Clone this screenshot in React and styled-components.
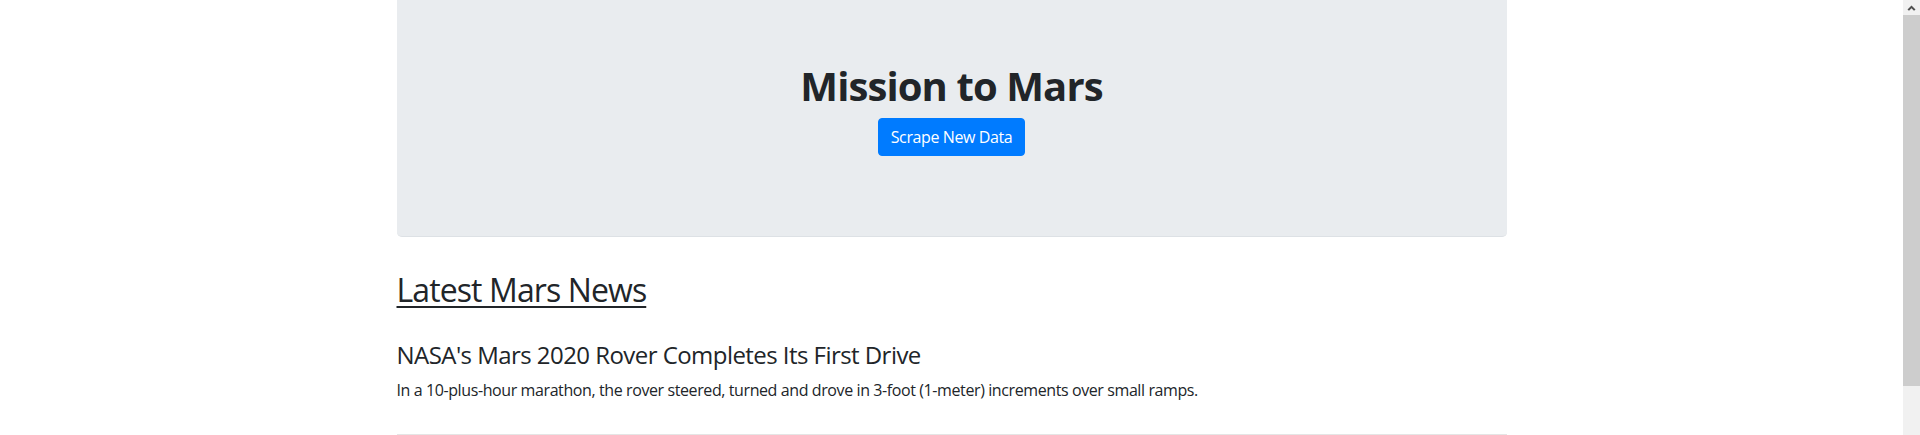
import styled, { createGlobalStyle } from 'styled-components';

const GlobalStyle = createGlobalStyle`
  html, body {
    margin: 0;
    padding: 0;
  }
  body {
    font-family: 'Open Sans', 'Liberation Sans', sans-serif;
    font-size: 16px;
    line-height: 1.5;
    color: #212529;
    background: #fff;
  }
  * {
    box-sizing: border-box;
  }
`;

// page + the browser's scrollbar as seen in the capture
const Viewport = styled.div`
  display: grid;
  grid-template-columns: 1fr 17px;
  align-items: start;
`;

const Scrollbar = styled.div`
  position: sticky;
  top: 0;
  height: 435px;
  display: flex;
  flex-direction: column;
  background: #f1f1f1;
`;

const ScrollArrow = styled.div`
  height: 15px;
  display: flex;
  align-items: center;
  justify-content: center;
  svg {
    width: 9px;
    height: 6px;
  }
`;

const ScrollThumb = styled.div`
  height: 371px;
  background: #cdcdcd;
`;

const Container = styled.div`
  width: 100%;
  max-width: 1140px;
  margin: 0 auto;
  padding: 0 15px 40px;
`;

const Jumbotron = styled.div`
  background: #e9ecef;
  margin-top: -2px;
  padding: 64px 32px;
  margin-bottom: 34px;
  border-radius: 0 0 4.8px 4.8px;
  border-bottom: 1px solid #dde1e5;
  text-align: center;
`;

const Title = styled.h1`
  margin: 0 0 8px;
  font-size: 40px;
  font-weight: 700;
  line-height: 1.2;
  letter-spacing: -0.9px;
`;

const ButtonRow = styled.p`
  margin: 0 0 16px;
`;

const Button = styled.button`
  font-family: inherit;
  font-size: 16px;
  line-height: 1.5;
  letter-spacing: -0.4px;
  color: #fff;
  background: #007bff;
  border: 1px solid #007bff;
  border-radius: 4px;
  padding: 6px 12px;
  cursor: pointer;
`;

const SectionTitle = styled.h2`
  margin: 0 0 8px;
  font-size: 32px;
  font-weight: 400;
  line-height: 1.2;
  letter-spacing: -0.9px;
  text-decoration: underline;
  text-decoration-thickness: 2px;
  text-underline-offset: 4px;
`;

const Article = styled.div`
  display: flow-root;
  padding-top: 24px;
`;

const ArticleTitle = styled.h4`
  margin: 0 0 8px;
  font-size: 24px;
  font-weight: 400;
  line-height: 1.2;
  letter-spacing: -0.55px;
`;

const ArticleText = styled.p`
  margin: 0 0 16px;
  font-size: 16px;
  letter-spacing: -0.4px;
`;

const Divider = styled.hr`
  margin: 16px 0;
  border: 0;
  border-top: 1px solid rgba(0, 0, 0, 0.1);
`;

export default function App() {
  return (
    <>
      <GlobalStyle />
      <Viewport>
        <Container>
          <Jumbotron>
            <Title>Mission to Mars</Title>
            <ButtonRow>
              <Button type="button">Scrape New Data</Button>
            </ButtonRow>
          </Jumbotron>
          <SectionTitle>Latest Mars News</SectionTitle>
          <Article>
            <ArticleTitle>NASA's Mars 2020 Rover Completes Its First Drive</ArticleTitle>
            <ArticleText>
              In a 10-plus-hour marathon, the rover steered, turned and drove in 3-foot (1-meter) increments over small ramps.
            </ArticleText>
          </Article>
          <Divider />
        </Container>
        <Scrollbar>
          <ScrollArrow>
            <svg viewBox="0 0 9 6">
              <path d="M4.5 0.5 L8.5 4.5 L7 5.8 L4.5 3.3 L2 5.8 L0.5 4.5 Z" fill="#505050" />
            </svg>
          </ScrollArrow>
          <ScrollThumb />
        </Scrollbar>
      </Viewport>
    </>
  );
}
